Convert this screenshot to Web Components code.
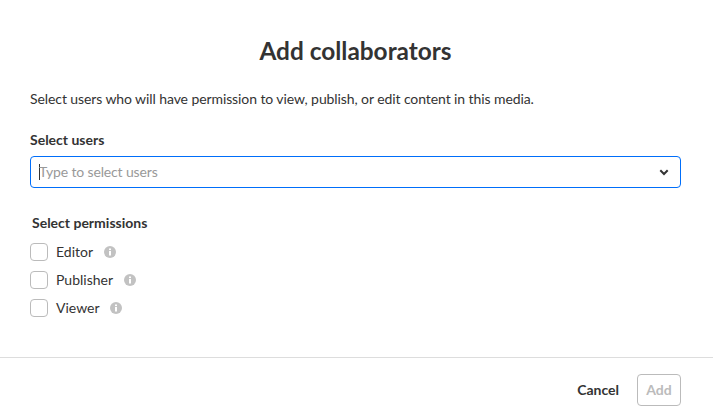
<!DOCTYPE html>
<html>
<head>
<meta charset="utf-8">
<title>Add collaborators</title>
<style>
    html, body { margin: 0; height: 100%; background: #fff; }
    body { font-family: Lato, sans-serif; color: #333; overflow: hidden; }
</style>
</head>
<body>
<collab-dialog>
    <span slot="title">Add collaborators</span>
    <span slot="intro">Select users who will have permission to view, publish, or edit content in this media.</span>
    <user-select slot="users" placeholder="Type to select users">Select users</user-select>
    <span slot="perm-title">Select permissions</span>
    <perm-check slot="perms">Editor</perm-check>
    <perm-check slot="perms">Publisher</perm-check>
    <perm-check slot="perms">Viewer</perm-check>
    <span slot="cancel">Cancel</span>
    <span slot="add">Add</span>
</collab-dialog>

<script>
class CollabDialog extends HTMLElement {
    constructor() {
        super();
        this.attachShadow({ mode: "open" });
    }

    connectedCallback() {
        this.shadowRoot.innerHTML = `
            <style>
                :host {
                    display: flex;
                    flex-direction: column;
                    height: 417px;
                    font-family: Lato, sans-serif;
                    color: #333;
                }
                .body {
                    flex: 1;
                    padding: 0 32px 0 30px;
                }
                h1 {
                    margin: 0;
                    padding-top: 33px;
                    height: 35px;
                    line-height: 35px;
                    text-align: center;
                    font-size: 24.4px;
                    font-weight: 700;
                }
                .intro {
                    margin-top: 21px;
                    height: 20px;
                    line-height: 20px;
                    font-size: 14px;
                    letter-spacing: -0.09px;
                }
                .users { margin-top: 21px; }
                .perm-title {
                    margin: 25px 0 0 2px;
                    height: 20px;
                    line-height: 20px;
                    font-size: 14px;
                    font-weight: 700;
                }
                .perms {
                    display: flex;
                    flex-direction: column;
                    gap: 10px;
                    margin: 10px 0 0;
                }
                footer {
                    display: flex;
                    justify-content: flex-end;
                    align-items: flex-start;
                    gap: 18px;
                    height: 43px;
                    padding: 16px 32px 0 0;
                    border-top: 1px solid #ddd;
                    font-size: 14px;
                    font-weight: 700;
                }
                .cancel {
                    height: 32px;
                    line-height: 32px;
                }
                .add {
                    box-sizing: border-box;
                    width: 44px;
                    height: 32px;
                    line-height: 30px;
                    text-align: center;
                    border: 1px solid #bbb;
                    border-radius: 4px;
                    color: #bbb;
                }
            </style>
            <div class="body">
                <h1><slot name="title"></slot></h1>
                <div class="intro"><slot name="intro"></slot></div>
                <div class="users"><slot name="users"></slot></div>
                <div class="perm-title"><slot name="perm-title"></slot></div>
                <div class="perms"><slot name="perms"></slot></div>
            </div>
            <footer>
                <span class="cancel"><slot name="cancel"></slot></span>
                <span class="add"><slot name="add"></slot></span>
            </footer>
        `;
    }
}

class UserSelect extends HTMLElement {
    constructor() {
        super();
        this.attachShadow({ mode: "open" });
    }

    connectedCallback() {
        const placeholder = this.getAttribute("placeholder");
        this.shadowRoot.innerHTML = `
            <style>
                :host { display: block; font-size: 14px; }
                label {
                    display: block;
                    height: 20px;
                    line-height: 20px;
                    font-weight: 700;
                    margin-bottom: 6px;
                }
                .box {
                    box-sizing: border-box;
                    display: flex;
                    align-items: center;
                    justify-content: space-between;
                    height: 32px;
                    padding: 0 11px 0 8px;
                    border: 1px solid #006efa;
                    border-radius: 4px;
                }
                .ph {
                    box-shadow: inset 1px 0 #333;
                    height: 16px;
                    line-height: 16px;
                    color: #999;
                    letter-spacing: -0.14px;
                }
                svg { display: block; }
            </style>
            <label><slot></slot></label>
            <div class="box">
                <span class="ph">${placeholder}</span>
                <svg width="10" height="7" viewBox="0 0 10 7">
                    <path d="M1.3 1.3 5 5l3.7-3.7" fill="none" stroke="#333" stroke-width="2"/>
                </svg>
            </div>
        `;
    }
}

class PermCheck extends HTMLElement {
    constructor() {
        super();
        this.attachShadow({ mode: "open" });
    }

    connectedCallback() {
        this.shadowRoot.innerHTML = `
            <style>
                :host {
                    display: flex;
                    align-items: center;
                    height: 18px;
                    font-size: 14px;
                    color: #333;
                }
                .box {
                    box-sizing: border-box;
                    width: 18px;
                    height: 18px;
                    border: 1px solid #bbb;
                    border-radius: 4px;
                    margin-right: 8px;
                }
                .text { margin-bottom: 2px; }
                svg { display: block; margin-left: 10.6px; }
            </style>
            <span class="box"></span>
            <span class="text"><slot></slot></span>
            <svg width="12" height="12" viewBox="0 0 12 12">
                <circle cx="6" cy="6" r="6" fill="#c2c2c2"/>
                <rect x="5" y="5" width="2" height="4.5" fill="#fff"/>
                <rect x="5" y="2.5" width="2" height="1.6" fill="#fff"/>
            </svg>
        `;
    }
}

customElements.define("collab-dialog", CollabDialog);
customElements.define("user-select", UserSelect);
customElements.define("perm-check", PermCheck);
</script>
</body>
</html>
